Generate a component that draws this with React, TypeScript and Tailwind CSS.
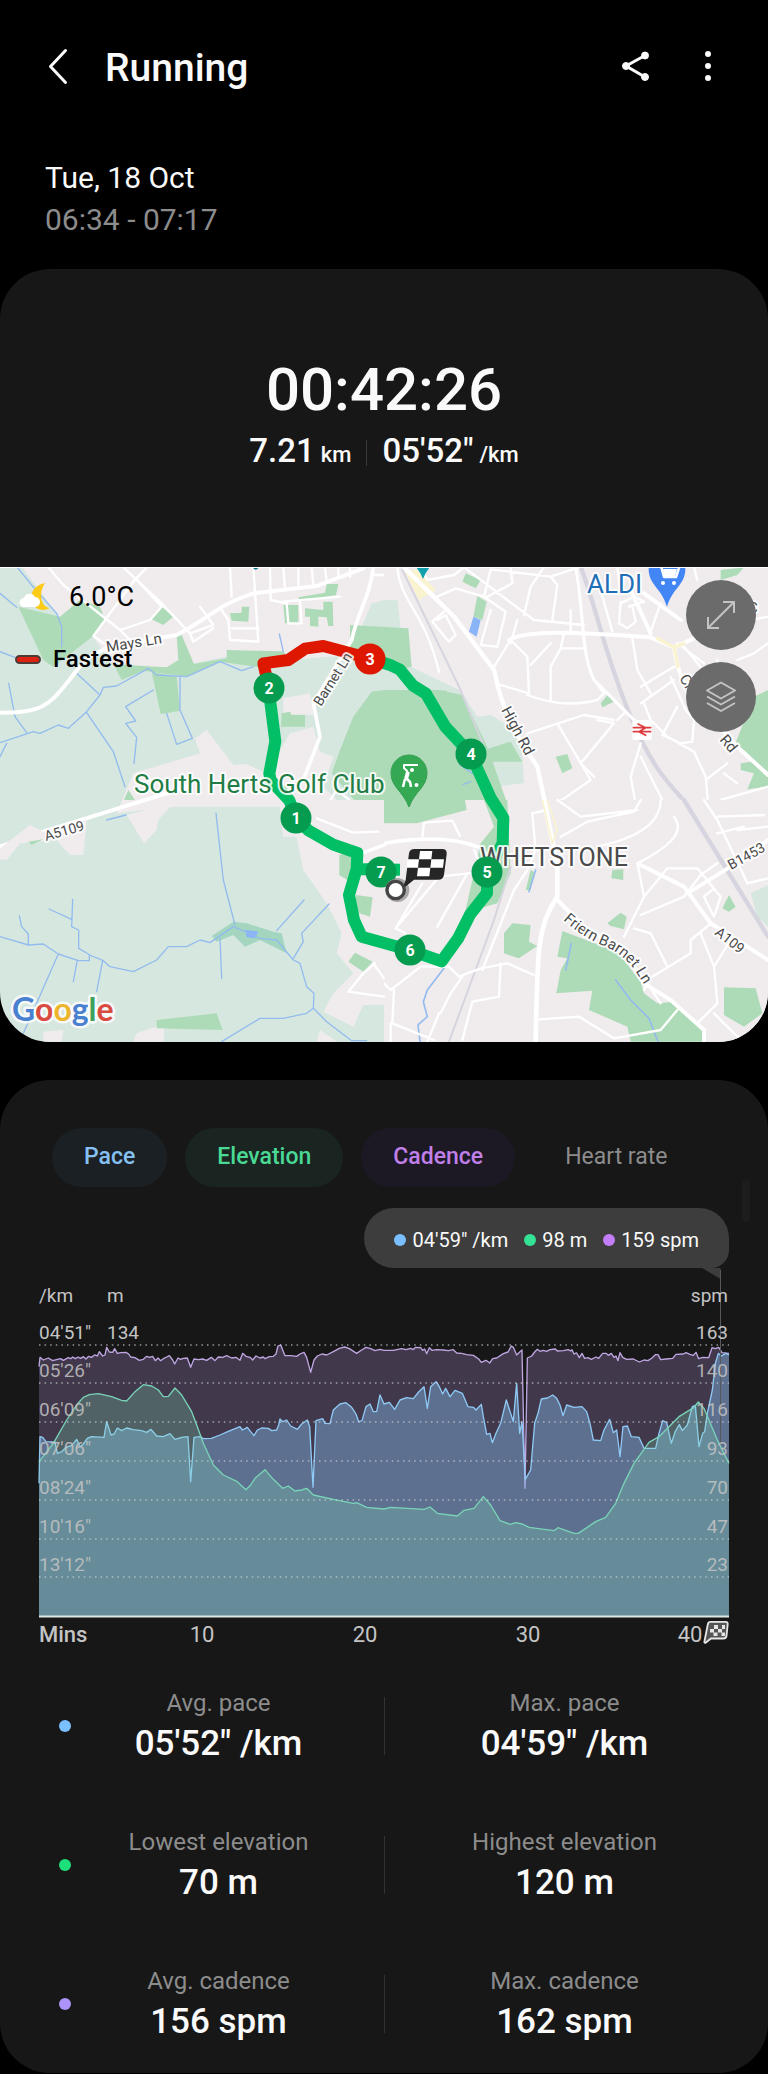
import { useState } from 'react'

type Metric = 'Pace' | 'Elevation' | 'Cadence' | 'Heart rate'

const TABS: Array<{ name: Metric; on: string }> = [
  { name: 'Pace', on: 'bg-[#1b2024] text-[#86c0f3] font-medium' },
  { name: 'Elevation', on: 'bg-[#1a2421] text-[#4ad895] font-medium' },
  { name: 'Cadence', on: 'bg-[#1c1924] text-[#c07fe9] font-medium' },
  { name: 'Heart rate', on: 'bg-[#241a1a] text-[#f08080] font-medium' },
]

const STATS = [
  { dot: 'bg-[#7abfff]', left: ['Avg. pace', `05'52" /km`], right: ['Max. pace', `04'59" /km`] },
  { dot: 'bg-[#1ee07a]', left: ['Lowest elevation', '70 m'], right: ['Highest elevation', '120 m'] },
  { dot: 'bg-[#ab93fa]', left: ['Avg. cadence', '156 spm'], right: ['Max. cadence', '162 spm'] },
]

export default function App() {
  return (
    <div className="min-h-screen bg-black text-[#fafafa] font-[Roboto,sans-serif]">
      <header className="h-[136px] flex items-center pl-[44px] pr-[45px]">
        <button aria-label="Back" className="w-[32px] h-[40px] -mt-1">
          <svg viewBox="0 0 32 40" className="w-full h-full" fill="none" stroke="currentColor" strokeWidth="3" strokeLinecap="round" strokeLinejoin="round">
            <path d="M21.500 4.500 6.500 20.500 21.500 36.500" />
          </svg>
        </button>
        <h1 className="ml-[29px] text-[39px] leading-[44px] font-medium">Running</h1>
        <button aria-label="Share" className="ml-auto w-[32px] h-[36px] -mt-1">
          <svg viewBox="0 0 32 36" className="w-full h-full" fill="currentColor" stroke="currentColor">
            <path d="M26 7.500 7 18 26 29" fill="none" strokeWidth="3" />
            <circle cx="26" cy="7.500" r="3.500" />
            <circle cx="7" cy="18" r="3.500" />
            <circle cx="26" cy="29" r="3.500" />
          </svg>
        </button>
        <button aria-label="More options" className="ml-[40px] w-[32px] h-[36px] -mt-1">
          <svg viewBox="0 0 32 36" className="w-full h-full" fill="currentColor">
            <circle cx="17" cy="6" r="3" />
            <circle cx="17" cy="18" r="3" />
            <circle cx="17" cy="30" r="3" />
          </svg>
        </button>
      </header>

      <div className="px-[45px] pt-[21px] pb-[28px] text-[30px] leading-[42px]">
        <div>Tue, 18 Oct</div>
        <div className="text-[#8c8c8c]">06:34 - 07:17</div>
      </div>

      <main>
        <section className="rounded-[50px] bg-[#171717] overflow-hidden">
          <div className="pt-[85px] pb-[92px] text-center font-medium">
            <div className="text-[60px] leading-[72px]">00:42:26</div>
            <div className="mt-[5px] flex justify-center items-center text-[33px] leading-[40px]">
              <span className="flex items-baseline gap-[6px]">7.21 <span className="text-[22px]">km</span></span>
              <span className="mx-[15px] w-px h-[26px] bg-[#3a3a3a]" />
              <span className="flex items-baseline gap-[6px]">05'52" <span className="text-[22px]">/km</span></span>
            </div>
          </div>
          <RouteMap />
        </section>

        <section className="relative mt-[38px] pt-[48px] rounded-[50px] bg-[#171717]">
          <Tabs />
          <div className="mt-[21px] mr-[39px] ml-auto w-fit h-[60px] px-[30px] pt-1 flex items-center gap-[16px] rounded-[30px] rounded-br-[18px] bg-[#3d3d3d] text-[20px]">
            <Reading dot="bg-[#7abfff]" text={`04'59" /km`} />
            <Reading dot="bg-[#35e295]" text="98 m" />
            <Reading dot="bg-[#c47df8]" text="159 spm" />
          </div>
          <RunChart />
          <div className="mt-1">
            {STATS.map(s => (
              <div key={s.left[0]} className="h-[139px] grid grid-cols-2 items-center">
                <div className="flex items-center pl-[59px] pr-[18px]">
                  <span className={`size-[12px] rounded-full ${s.dot}`} />
                  <Stat label={s.left[0]} value={s.left[1]} />
                </div>
                <div className="flex items-center pr-[24px]">
                  <span className="w-px h-[58px] bg-[#333]" />
                  <Stat label={s.right[0]} value={s.right[1]} />
                </div>
              </div>
            ))}
          </div>
          {/* scroll thumb, almost faded out */}
          <span className="absolute right-[18px] top-[100px] w-[8px] h-[42px] rounded-sm bg-[#1d1d1d]" />
        </section>
      </main>
    </div>
  )
}

function Tabs() {
  const [active, setActive] = useState<Metric[]>(['Pace', 'Elevation', 'Cadence'])
  const toggle = (m: Metric) => setActive(a => (a.includes(m) ? a.filter(x => x !== m) : [...a, m]))
  return (
    <div className="pl-[52px] flex gap-[18px]">
      {TABS.map(t => (
        <button
          key={t.name}
          aria-pressed={active.includes(t.name)}
          onClick={() => toggle(t.name)}
          className={`h-[59px] px-8 rounded-[30px] text-[23px] whitespace-nowrap ${active.includes(t.name) ? t.on : 'text-[#8c8c8c]'}`}
        >
          {t.name}
        </button>
      ))}
    </div>
  )
}

function Reading({ dot, text }: { dot: string; text: string }) {
  return (
    <span className="flex items-center gap-[6px] whitespace-nowrap">
      <span className={`size-[12px] rounded-full ${dot}`} />
      {text}
    </span>
  )
}

function Stat({ label, value }: { label: string; value: string }) {
  return (
    <div className="grow pt-[3px] text-center">
      <div className="text-[24px] leading-[34px] text-[#8c8c8c]">{label}</div>
      <div className="text-[35px] leading-[48px] font-medium">{value}</div>
    </div>
  )
}

// ---- chart ----

const CADENCE = '117,290 120,262 130,270 145,264 158,272 172,268 182,266 190,271 205,263 212,266 218,261 226,266 234,261 242,265 250,260 258,267 266,259 274,262 284,255 292,258 298,245 308,258 315,255 320,232 328,246 338,247 344,236 352,250 362,248 378,247 386,252 392,261 405,263 418,271 430,268 440,259 448,262 458,259 466,272 474,264 482,272 490,266 500,261 508,257 518,270 524,282 534,264 542,268 550,265 562,264 572,292 582,267 595,269 608,267 620,271 634,262 645,272 655,261 668,262 680,257 695,264 708,262 720,271 728,250 738,259 750,262 758,270 768,258 780,264 790,261 795,266 808,260 820,259 828,252 834,228 842,225 855,257 872,257 890,259 900,252 912,247 920,262 932,307 942,270 952,258 966,252 980,255 1000,245 1018,235 1034,231 1048,236 1070,250 1085,240 1098,232 1112,236 1125,242 1140,238 1152,241 1180,241 1205,236 1218,239 1232,235 1240,239 1246,232 1262,233 1268,241 1274,237 1280,251 1288,233 1296,241 1310,239 1330,240 1345,242 1360,239 1370,249 1385,250 1400,254 1420,256 1436,267 1444,277 1458,271 1469,279 1478,266 1490,264 1510,251 1524,246 1534,228 1540,232 1550,255 1560,245 1566,240 1575,655 1582,264 1595,258 1604,246 1612,238 1620,244 1630,241 1640,244 1650,239 1666,237 1672,243 1690,242 1705,239 1712,243 1716,239 1722,252 1730,249 1738,263 1746,250 1754,265 1764,263 1774,268 1788,261 1796,265 1808,250 1818,250 1825,256 1834,250 1842,262 1848,258 1854,272 1860,248 1868,262 1880,268 1900,267 1918,276 1932,270 1944,272 1956,264 1966,254 1974,254 1982,269 1998,267 2018,265 2028,253 2050,252 2058,248 2070,253 2080,256 2088,247 2096,266 2108,262 2126,263 2136,233 2146,236 2156,232 2166,248 2187,250'

const PACE = '117,640 120,500 128,502 138,515 165,516 172,550 185,545 198,532 215,526 230,508 240,530 250,522 262,505 274,500 312,502 320,455 333,495 342,492 352,474 365,482 380,474 400,479 425,482 440,487 453,478 470,498 490,500 510,491 525,508 545,502 564,500 572,635 582,502 600,500 610,506 634,505 660,495 685,484 720,470 727,480 742,472 752,485 762,497 772,480 785,474 805,475 815,482 830,480 836,465 840,447 848,455 860,450 872,468 892,478 905,462 922,450 929,470 939,652 948,452 968,446 975,460 990,461 1000,420 1020,402 1038,398 1055,412 1068,432 1076,455 1086,452 1098,410 1110,402 1120,425 1130,425 1140,375 1152,402 1168,397 1184,418 1200,390 1220,383 1240,386 1256,366 1272,350 1282,415 1292,350 1308,335 1318,350 1328,372 1337,355 1350,380 1365,361 1387,370 1404,410 1420,412 1428,420 1444,403 1450,440 1460,493 1470,490 1477,518 1488,490 1502,460 1519,390 1540,455 1550,340 1559,490 1566,455 1576,628 1592,600 1604,460 1614,430 1624,387 1642,384 1658,375 1670,385 1680,405 1689,437 1700,405 1722,412 1746,410 1760,425 1770,460 1780,510 1802,512 1812,480 1829,448 1840,488 1850,480 1860,560 1869,470 1882,468 1894,500 1917,502 1932,535 1967,535 1977,490 1988,452 2000,458 2014,520 2026,484 2038,464 2047,482 2062,465 2077,410 2086,406 2097,530 2108,490 2114,485 2122,430 2137,360 2146,280 2155,250 2164,258 2177,250 2187,255'

const ELEVATION = '117,575 160,520 200,450 232,402 250,382 268,374 295,371 335,380 365,391 380,393 405,365 430,344 455,348 475,360 490,380 505,379 525,354 545,375 575,425 590,465 610,520 640,585 670,615 710,634 738,659 752,645 765,625 795,599 820,628 848,655 865,648 885,663 905,660 920,655 940,675 1000,688 1060,700 1070,698 1100,712 1152,717 1172,712 1272,718 1290,711 1312,730 1372,738 1392,721 1422,715 1450,680 1472,705 1500,752 1530,763 1547,758 1567,762 1587,772 1662,782 1674,773 1722,790 1735,790 1787,755 1817,742 1847,700 1872,640 1902,580 1947,517 1977,500 2037,440 2082,412 2095,396 2112,415 2152,510 2187,580'

const GRID = [75, 113, 152, 191, 230, 269, 307]
const PACE_LABELS = [`04'51"`, `05'26"`, `06'09"`, `07'06"`, `08'24"`, `10'16"`, `13'12"`]
const SPM_LABELS = ['163', '140', '116', '93', '70', '47', '23']

function Series({ points, fill, stroke }: { points: string; fill: string; stroke: string }) {
  return (
    <>
      <polygon points={`117,1040 ${points} 2187,1040`} fill={fill} />
      <polyline points={points} fill="none" stroke={stroke} strokeWidth="4" strokeLinejoin="round" />
    </>
  )
}

function RunChart() {
  return (
    <svg viewBox="0 -2 768 384" className="block w-full h-auto" fontSize="19" fill="#c4c4c4" role="img" aria-label="Pace, elevation and cadence over time">
      <path d="M702-2h18.500v11z" fill="#3d3d3d" />
      <g transform="scale(.33333)">
        <Series points={CADENCE} fill="rgba(192,160,232,.25)" stroke="#bfa6e2" />
        <Series points={PACE} fill="rgba(135,195,245,.4)" stroke="#8fc9f5" />
        <Series points={ELEVATION} fill="rgba(130,225,185,.25)" stroke="#79d3b8" />
      </g>
      {GRID.map(y => (
        <line key={y} x1="39" x2="729" y1={y} y2={y} stroke="#d5dade" strokeOpacity=".65" strokeWidth="1.500" strokeDasharray="1.500 4.100" />
      ))}
      <line x1="39" x2="729" y1="346.500" y2="346.500" stroke="#dfe8e8" strokeWidth="2" />
      <line x1="720.500" x2="720.500" y1="0" y2="175" stroke="#55585c" />
      <text x="39" y="32">/km</text>
      <text x="107" y="32">m</text>
      <text x="728" y="32" textAnchor="end">spm</text>
      <text x="107" y="69">134</text>
      {PACE_LABELS.map((t, i) => <text key={t} x="39" y={GRID[i] - 6} fillOpacity={i ? 0.85 : 1}>{t}</text>)}
      {SPM_LABELS.map((t, i) => <text key={t} x="728" y={GRID[i] - 6} textAnchor="end" fillOpacity={i ? 0.85 : 1}>{t}</text>)}
      <g fontSize="22">
        <text x="39" y="372" fontWeight="500">Mins</text>
        <text x="202" y="372" textAnchor="middle">10</text>
        <text x="365" y="372" textAnchor="middle">20</text>
        <text x="528" y="372" textAnchor="middle">30</text>
        <text x="690" y="372" textAnchor="middle">40</text>
      </g>
      <g transform="translate(704 351)">
        <path d="M4 2.500Q4.500.800 6.500.800H21.500Q24 .800 23.700 3.300L22.500 15Q22 17.500 19.500 17.500H7L1.500 21.800Q0 22 .500 20z" fill="#555" stroke="#e6e6e6" strokeWidth="1.800" />
        <path d="M10 4h4v4h-4zM18 4h3v4h-3zM6 8h4v3.500H6zM14 8h4v3.500h-4zM9.500 11.500h4v3.500h-4zM17.500 11.500h3.500V15h-3.500z" fill="#e6e6e6" />
      </g>
    </svg>
  )
}

// ---- map ----

const PARK = '#aedbb7'
const TOWN = '#f0ecee'
const FIELD = '#d6e7e0'

function RouteMap() {
  return (
    <div className="relative border-t border-white">
      <svg viewBox="0 0 768 474" className="block w-full h-auto" role="img" aria-label="Map of the run">
        <rect width="768" height="474" fill={FIELD} />
        <g transform="scale(.33333)" fill="none" strokeLinejoin="round" strokeLinecap="round">
          <NorthEast />
          <SouthEast />
          <NorthWest />
          <SouthWest />
        </g>
        <Route />
        <Labels />
        <Markers />
      </svg>
      <div className="absolute left-[15px] top-[13px] flex flex-col gap-[30px] text-black">
        <div className="flex items-center gap-[19px] text-[27px] leading-[32px]">
          <svg viewBox="0 0 35 30" className="w-[35px] h-[30px]">
            <path d="M30 1C19 3 14 12 17 20s11 10 18 6C26 25 23 12 30 1z" fill="#fccb17" />
            <path d="M9 25a4.500 4.500 0 0 1 0-9 6 6 0 0 1 11-1 4.500 4.500 0 0 1 0 10z" fill="#fff" />
          </svg>
          6.0°C
        </div>
        <div className="flex items-center gap-[12px] text-[24px] leading-[32px] font-medium">
          <span className="w-[26px] h-[9px] rounded-full bg-[#dd2211] border-2 border-[#4d3b36]" />
          Fastest
        </div>
      </div>
      <div className="absolute right-[12px] top-[12px] flex flex-col gap-[12px] text-[#c3c3c3]">
        <button aria-label="Expand map" className="size-[70px] rounded-full bg-[#6b6b6b] flex items-center justify-center">
          <svg viewBox="0 0 30 30" className="size-[30px]" fill="none" stroke="currentColor" strokeWidth="2">
            <path d="M2 28 28 2M17 2h11v11M2 17v11h11" />
          </svg>
        </button>
        <button aria-label="Map layers" className="size-[70px] rounded-full bg-[#6b6b6b] flex items-center justify-center">
          <svg viewBox="0 0 32 32" className="size-[32px]" fill="none" stroke="currentColor" strokeWidth="2" strokeLinejoin="round">
            <path d="M16 1.500 30 9.500 16 17.500 2 9.500zM2 15.500l14 8 14-8M2 22l14 8 14-8" />
          </svg>
        </button>
      </div>
    </div>
  )
}

function NorthWest() {
  return (
    <g transform="translate(0 -24)">
      <g fill={TOWN}>
        <path d="M65 20H1152V120L1115 130 1085 200 1055 195V285L860 300 780 270 580 310 430 330 350 330 280 230 180 175z" />
        <path d="M400 640 600 580 585 535 620 510 700 615 740 612 800 640 870 520 940 500 960 575 1000 590 970 680 1010 720 1152 750V830H850L840 740 520 740 350 760z" />
        <path d="M850 415 930 400 940 465 850 462z" />
      </g>
      <g fill={PARK}>
        <path d="M55 140 180 170 240 120 300 140 315 178 280 228 160 320 130 300z" />
        <path d="M530 228 545 225 582 312 680 295V270L850 274 865 295 780 322 660 305 560 350 430 332 365 360 340 312 430 318 500 322 535 300z" />
        <path d="M455 335 530 350 540 452 482 462zM455 178 485 140 520 170 490 195zM690 160 725 158V140H748L745 185 695 182zM850 135H895V190H855zM915 145 970 150V125H998L1000 198H985L980 172 955 170V200L930 198V170H915zM895 112 975 98 980 72 1015 72 1008 105 900 125zM845 460 870 455 875 465H915V500H843z" />
        <path d="M1050 195 1225 205 1235 320 1190 330 1152 300 1050 262zM372 720 385 690 405 720z" />
        <path d="M1152 390 1115 395 1060 470 1020 570 995 640 1080 740 1150 790 1250 790 1400 750 1340 392z" />
      </g>
      <g stroke="#93bbee" strokeWidth="4">
        <path d="M50 20 95 75 170 160 185 200V260M0 100 50 142M0 275 45 292M0 548 100 515 120 520 175 495 205 505 260 455 300 405 310 382 350 378 445 325 470 345 560 350 660 305 725 332 760 320M26 370 45 470 80 518M225 335 300 405M260 458 340 575 375 680M460 390 377 440 407 483 377 490 410 532 402 610M500 460 530 553 577 535 540 450V352M0 590 20 550M838 222 850 275" />
      </g>
      <g stroke="#fff" strokeWidth="7">
        <path d="M145 22 190 75 360 210 450 180 485 140M370 22 480 125 570 220 640 195 600 140M360 210 390 240M440 22 400 65 280 228 340 270M410 60 485 140M690 22 695 110M760 22 775 245 690 240 685 180 665 150M695 205H775M810 22 812 120 860 130 865 190H905L900 125M850 22 855 85M895 22V80M935 22 940 75M975 22 980 65M1015 22V50M1050 22V50M570 220 580 245 640 205M1120 45H1150M850 125 1020 110" />
        <path d="M0 458C130 460 150 430 200 370S240 300 330 260L530 225C620 180 660 130 760 100L950 78 1090 25" strokeWidth="12" />
        <path d="M1120 22C1110 110 1075 150 1055 240L940 430 960 530 910 660" strokeWidth="11" />
        <path d="M0 860 130 815 500 700 560 680" strokeWidth="12" />
        <path d="M1010 690 960 770 1010 820M1010 690 1120 775 1145 850" />
      </g>
    </g>
  )
}

function SouthWest() {
  return (
    <g transform="translate(0 696)">
      <g fill={TOWN}>
        <path d="M0 145 90 75 130 95 260 60 250 165H210L170 120 60 130 20 180 0 178zM380 45 520 10 475 60 470 90 432 130z" />
        <path d="M880 0H1152V615H1090L1060 680 970 635 1000 580 1060 520 1010 460 1025 400 980 310 910 210 885 90zM130 695 190 690 185 725H130zM400 725 410 700 495 670 490 725zM960 690 1010 725H950z" />
      </g>
      <g fill={PARK}>
        <path d="M470 660 650 640 668 690 470 685zM1018 165 1080 150 1050 245 1018 225zM1068 285 1118 292 1110 350 1065 335zM1045 485 1065 458 1118 485 1090 515zM85 125 130 118 95 135z" />
        <path d="M635 408 700 365 740 370 820 395 845 400 860 460 780 420 735 440 700 405 650 425z" fill="#a4d6bf" />
      </g>
      <path d="M735 390 775 395 765 415 740 412z" fill="#8ab4f8" />
      <g stroke="#93bbee" strokeWidth="4">
        <path d="M0 410 85 435 130 432 175 462 235 482H268V465L310 482 330 500 400 515 470 480 505 440H560L600 420 630 428 700 380 780 415 830 420 880 480 900 490 920 560 942 580 940 625 980 665 1055 722H1100M940 625 920 640 850 655 780 655 665 725M58 348 65 380 85 402V435M147 327 215 358M218 298 215 380 236 390V445L270 465M175 462 70 700M232 480 220 545M308 482 290 575M648 40 670 240 705 375M660 415 665 535M912 300 830 392M987 312 905 400 910 425 880 475M320 60 378 45" />
      </g>
      <g stroke="#fff" strokeWidth="7">
        <path d="M1125 490 1090 520 1045 575 1152 590M1120 490 1152 535M950 55 1060 98 1135 95" />
        <path d="M1085 160 1152 135" strokeWidth="10" />
      </g>
    </g>
  )
}

function NorthEast() {
  return (
    <g transform="translate(1152 -24)">
      <path d="M0 20H1152V760H0z" fill={TOWN} />
      <path d="M0 120H40L50 205H0zM0 330 80 320 230 392 280 470 320 465 410 520 420 670 330 680 370 760H0z" fill={FIELD} />
      <g fill={PARK}>
        <path d="M0 390 165 390 235 405 310 560 380 760H0zM245 40 290 60 275 85 235 65zM280 108 308 125 295 180 268 170zM300 570 380 545 415 605H310zM650 430 675 400 690 425 655 442zM515 590 550 582 565 625 535 640zM1010 30 1080 22 1060 45 1010 60zM1152 390 1110 410 1050 560 1152 635zM1070 610 1100 605 1152 640V680L1090 688 1110 640 1070 630z" />
      </g>
      <path d="M268 170 290 180 278 230 255 215z" fill="#8ab4f8" />
      <path d="M130 640 200 595 265 640M130 645 205 685 260 665" stroke="#93bbee" strokeWidth="4" />
      <path d="M60 30 100 30 155 90 105 120z" fill="#faf3cf" />
      <g stroke="#d6d4de">
        <path d="M55 30 225 380 300 560" strokeWidth="6" />
        <path d="M590 20C640 150 660 280 740 470S870 680 950 780" strokeWidth="13" />
      </g>
      <g stroke="#fff" strokeWidth="7">
        <path d="M40 22C50 130 120 150 165 335M110 22 130 60 210 45 240 22M320 28 300 110 215 85 160 110M300 110 365 155 340 260 290 255 320 150M240 22 450 180 600 195M320 28 500 50 590 20M500 50 520 75 505 180M480 22 440 80 420 165M380 22 385 70 310 110M160 180 185 165 215 225 195 245 145 185 180 155M330 320 380 240 430 290 435 400M380 250 400 180M500 422V320L530 265H600M440 315 500 250M540 220 530 265M560 150V220M435 400 350 375M630 360 660 400 640 420C560 440 500 430 430 405M650 90 685 215M700 22 710 100M745 235 760 330 800 400M830 130 800 215M710 130 750 110 780 125 735 140M710 125 705 190 730 205 755 185 745 140M870 320 770 380M930 22 940 60M900 260 990 370 1060 320M880 250 960 310M860 350 905 450 930 480 925 545 890 550 835 525 880 440M640 480 690 490 590 610 630 650M690 480 600 465 430 520M520 490 620 660 490 750M720 460 700 480M770 430 870 360M780 430 800 480 850 530 930 575 965 650 975 760M770 590 800 650 850 750M770 550 740 650 760 760M1000 380V300M1100 180 1152 170M1060 300 1110 280 1152 250M1010 760V720L1152 680M965 660 1030 610M1020 640 1060 670" />
        <path d="M60 22 210 170 330 330C350 420 360 450 420 560L460 620 490 760" strokeWidth="13" />
        <path d="M575 22C600 150 590 280 630 360L770 500" strokeWidth="9" />
        <path d="M375 240C430 210 560 215 800 232L870 262 930 235M740 90 800 220M780 100 890 180M870 262C880 340 900 380 960 450L1060 560 1152 645" strokeWidth="12" />
      </g>
      <path d="M820 235 870 262 900 250M870 262 882 320" stroke="#faf3cf" strokeWidth="10" />
      {/* railway station */}
      <rect x="745" y="480" width="58" height="60" rx="6" fill="#fff" />
      <path d="M748 503H800M748 515H800M762 492 785 503 765 515 785 526" stroke="#dc3c3c" strokeWidth="5" />
    </g>
  )
}

function SouthEast() {
  return (
    <g transform="translate(1152 696)">
      <path d="M0 0H1152V730H0z" fill={TOWN} />
      <path d="M1100 280 1152 255V380L1120 350zM-300 460-200 500-100 730H-400z" fill={FIELD} />
      <g fill={PARK}>
        <path d="M0-20H100L95 20 60 50 0 30zM300 0 370 0 380 220 340 310 270 330 190 460 240 350 290 130 330 80zM360 400 385 370 440 375 435 425 460 438 405 475 360 460zM535 393 700 455 770 545 780 580 820 610 870 605 955 680 960 725H740L730 680 615 630 625 572 517 580 530 510 550 475 520 470zM685 210 718 208V240L682 235zM670 370 710 338 728 350 720 388 680 378zM1015 325 1035 285 1055 320 1035 335zM1020 562 1115 565 1135 640 1080 680 1020 645zM425 270 440 210 450 215 440 270z" />
      </g>
      <g stroke="#93bbee" strokeWidth="5">
        <path d="M180 505 130 570 118 605 130 650 102 675 108 725M695 540 740 600 795 655 822 725M562 430 545 510M455 210 435 275" />
      </g>
      <g stroke="#d6d4de">
        <path d="M380 200 330 360 195 725" strokeWidth="6" />
        <path d="M900 0 1152 410" strokeWidth="13" />
      </g>
      <g stroke="#fff" strokeWidth="7">
        <path d="M115 110 120 68 205 62 228 108M165 230 35 385 65 400M35 385 115 250M165 230 300 215 270 150M250 220 160 380M0 550 20 570 110 500 195 500 225 530 290 505 370 490 450 525M30 570 25 670 150 720M20 670V725M350 490 345 590 265 605 235 720M445 40 455 150 430 210 390 270 295 510M445 40 490 30M520 0 590 50 760 30M530 110 610 65 750 35 770 0M830 0C830 60 780 110 640 140M870 50C910 100 840 150 760 190L780 290 720 410M750 385 800 400 850 500M780 545 920 460V420L975 375M950 400 990 500 1000 610 940 670M990 500 1040 420M770 345 900 290 950 225 1000 190M780 290 850 205H940L1010 290 990 350 960 290 990 265M960 0 1000 60 1090 250 1152 235M1000 50 1140 45M1060 90 1152 80M1000 100 1080 80M465 658 585 650 690 715 830 690 880 630M780 570 790 550 830 610M990 640 1050 700 1080 725M170 640 200 580 235 530M130 725 165 640" />
        <path d="M0 130C90 115 200 110 280 140" strokeWidth="11" />
        <path d="M480 0 505 120 520 200V290C460 380 460 450 455 725" strokeWidth="14" />
        <path d="M515 295 600 380 720 450 780 550 860 600 960 690V725M770 195 900 260 980 370 1152 480M910 280 1040 200 1152 120" strokeWidth="12" />
      </g>
      <path d="M475 0 505 130 520 90 490 0" stroke="#faf3cf" strokeWidth="5" />
    </g>
  )
}

function Route() {
  return (
    <g transform="scale(.33333)" fill="none" strokeWidth="36" strokeLinejoin="round">
      <path d="M1200 905 1070 903 1072 855 1000 830 925 787 888 749 868 697 812 637 808 617 826 520 812 410 806 361M1112 272 1168 290 1200 305 1238 352 1278 377 1335 475 1412 558 1472 690 1510 750 1508 826 1461 911V975L1410 1040 1375 1110 1325 1180 1228 1146 1085 1106 1062 1056 1047 981 1070 903" stroke="#02bf66" />
      <path d="M798 320 790 286 865 276 915 242 970 234 1060 258 1112 272" stroke="#dd1700" />
    </g>
  )
}

const KM = [
  { n: 1, x: 296, y: 250 },
  { n: 2, x: 269, y: 120 },
  { n: 3, x: 370, y: 91, fastest: true },
  { n: 4, x: 471, y: 186 },
  { n: 5, x: 487, y: 304 },
  { n: 6, x: 410, y: 382 },
  { n: 7, x: 381, y: 304 },
]

function Markers() {
  return (
    <>
      {KM.map(k => (
        <g key={k.n}>
          <circle cx={k.x} cy={k.y} r="15.500" fill={k.fastest ? '#dd1700' : '#069c50'} />
          <text x={k.x} y={k.y + 6} fontSize="16" fontWeight="700" fill="#fff" textAnchor="middle">{k.n}</text>
        </g>
      ))}
      {/* start ring with the finish flag over it */}
      <g transform="translate(384 232) scale(.33333)">
        <circle cx="40" cy="270" r="36" fill="#8a8a8a" opacity=".7" />
        <path d="M65 240 75 160Q77 147 92 147H174Q190 147 188 163L180 224Q178 239 162 239H90L55 268z" fill="#262626" />
        <path d="M108 153H145L142 178H105zM70 178H105L102 203H68zM142 178H180L177 203H139zM102 203H139L136 229H99z" fill="#fff" />
        <circle cx="35" cy="270" r="26" fill="#fff" stroke="#454545" strokeWidth="10" />
      </g>
    </>
  )
}

function Labels() {
  return (
    <g strokeWidth="4" strokeLinejoin="round" paintOrder="stroke" stroke="#fff" strokeOpacity=".85" fill="#4a4a4a" fontSize="15">
      <path d="M415-2h16q-5 5-8 13-3-8-8-13z" fill="#12a0ac" stroke="none" />
      <path d="M253 0q3 4 6-1l1-2h-2l-1 2z" fill="#167c8a" stroke="none" />
      <path d="M649 5a18 18 0 0 1 0-7h36a18 18 0 0 1 0 7c-2 13-13 16-18 34-5-18-16-21-18-34z" fill="#4285f4" stroke="none" />
      <path d="M657-2h4l3 11h12l3-9" fill="none" stroke="#fff" strokeWidth="2.500" strokeOpacity="1" />
      <path d="M663 1h14l-2 7h-11z" fill="#fff" stroke="none" />
      <circle cx="663" cy="15" r="2" fill="#fff" stroke="none" />
      <circle cx="674" cy="15" r="2" fill="#fff" stroke="none" />
      <text x="587" y="25" fontSize="26" fill="#1f6fb8">ALDI</text>
      <text x="134" y="225" fontSize="26" fill="#1f7d45">South Herts Golf Club</text>
      <text x="480" y="298" fontSize="25">WHETSTONE</text>
      <text transform="translate(107 84) rotate(-9)">Mays Ln</text>
      <text transform="translate(321 139) rotate(-58)" fontSize="14">Barnet Ln</text>
      <text transform="translate(501 142) rotate(62)">High Rd</text>
      <text transform="translate(46 273) rotate(-16)" fontSize="14">A5109</text>
      <text transform="translate(731 302) rotate(-29)" fontSize="14">B1453</text>
      <text transform="translate(714 366) rotate(38)" fontSize="14">A109</text>
      <text transform="translate(679 110) rotate(60)">Ch</text>
      <text transform="translate(719 172) rotate(50)">Rd</text>
      <text x="748" y="45">C</text>
      <path id="friern" d="M563 352Q582 369 604 378T638 407Q644 416 660 442" fill="none" stroke="none" />
      <text><textPath href="#friern">Friern Barnet Ln</textPath></text>
      {/* golf course pin */}
      <path d="M409 187a18 18 0 0 1 18 18c0 14-12 18-18 34-6-16-18-20-18-34a18 18 0 0 1 18-18z" fill="#34a853" stroke="#1e8a40" strokeWidth="1" />
      <g fill="none" stroke="#fff" strokeOpacity="1">
        <path d="M418 197H404v3l4 4" strokeWidth="2" />
        <path d="M408 204l-2 7" strokeWidth="4" />
        <path d="M405 211l-2 8M406 210l4 4 1 5" strokeWidth="2.500" />
        <circle cx="412" cy="202" r="2" fill="#fff" stroke="none" />
        <circle cx="416.500" cy="217" r="2" fill="#fff" stroke="none" />
      </g>
      <text x="12" y="453" fontSize="32" fontFamily="Lato, sans-serif" fontWeight="700" strokeWidth="5" strokeOpacity=".8">
        <tspan fill="#4a80d0">G</tspan><tspan fill="#d94b3f">o</tspan><tspan fill="#edb52c">o</tspan><tspan fill="#4a80d0">g</tspan><tspan fill="#3fa25a">l</tspan><tspan fill="#d94b3f">e</tspan>
      </text>
    </g>
  )
}
